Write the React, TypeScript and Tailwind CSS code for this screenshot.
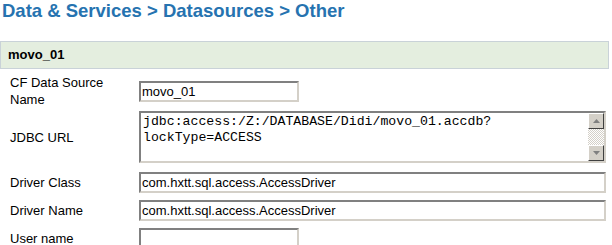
import React from "react";

const inset =
  "border-2 border-t-[#808080] border-l-[#808080] border-b-[#d4d0c8] border-r-[#d4d0c8] bg-white";

function Field({ w, value }: { w: string; value?: string }) {
  return (
    <div className={`${inset} ${w} h-[21px] flex items-center px-[1px] text-[13px] text-black leading-none`}>
      {value}
    </div>
  );
}

function Label({ children, cls = "" }: { children: React.ReactNode; cls?: string }) {
  return <div className={`w-[139px] shrink-0 pl-[10px] text-[13px] leading-[17px] text-black ${cls}`}>{children}</div>;
}

export default function App() {
  return (
    <div className="w-[612px] h-[245px] overflow-hidden bg-white" style={{ fontFamily: '"Liberation Sans", Arial, sans-serif' }}>
      <div className="pl-[2px] text-[18.5px] font-bold text-[#2673b0] leading-[22px]">
        Data &amp; Services &gt; Datasources &gt; Other
      </div>
      <div className="mt-[19px] w-[609px] h-[28px] border border-[#c9d2d8] bg-[#e4eedf] flex items-center pl-[7px] text-[13px] font-bold text-black">
        movo_01
      </div>
      <div className="flex items-center mt-[5px] h-[34px]">
        <Label>CF Data Source<br />Name</Label>
        <Field w="w-[160px]" value="movo_01" />
      </div>
      <div className="flex items-center mt-[3px]">
        <Label>JDBC URL</Label>
        <div className={`${inset} w-[467px] h-[52px] flex`}>
          <div className="flex-1 pl-[2px] pt-[1px] text-[13.2px] leading-[16px] text-black" style={{ fontFamily: '"Liberation Mono", "Courier New", monospace' }}>
            jdbc:access:/Z:/DATABASE/Didi/movo_01.accdb?
            <br />
            lockType=ACCESS
          </div>
          <div className="w-[16px] h-full flex flex-col bg-[#e8e6e0]">
            <div className="h-[16px] bg-[#d4d0c8] border border-t-white border-l-white border-b-[#404040] border-r-[#404040] flex items-center justify-center">
              <svg width="7" height="4" viewBox="0 0 7 4"><path d="M3.5 0 L7 4 L0 4Z" fill="#808080" /></svg>
            </div>
            <div className="flex-1 bg-[repeating-conic-gradient(#d4d0c8_0_25%,#ffffff_0_50%)] bg-[length:2px_2px]" />
            <div className="h-[16px] bg-[#d4d0c8] border border-t-white border-l-white border-b-[#404040] border-r-[#404040] flex items-center justify-center">
              <svg width="7" height="4" viewBox="0 0 7 4"><path d="M0 0 L7 0 L3.5 4Z" fill="#808080" /></svg>
            </div>
          </div>
        </div>
      </div>
      <div className="flex items-center mt-[9px]">
        <Label>Driver Class</Label>
        <Field w="w-[467px]" value="com.hxtt.sql.access.AccessDriver" />
      </div>
      <div className="flex items-center mt-[7px]">
        <Label>Driver Name</Label>
        <Field w="w-[467px]" value="com.hxtt.sql.access.AccessDriver" />
      </div>
      <div className="flex items-center mt-[7px]">
        <Label>User name</Label>
        <Field w="w-[160px]" />
      </div>
    </div>
  );
}
